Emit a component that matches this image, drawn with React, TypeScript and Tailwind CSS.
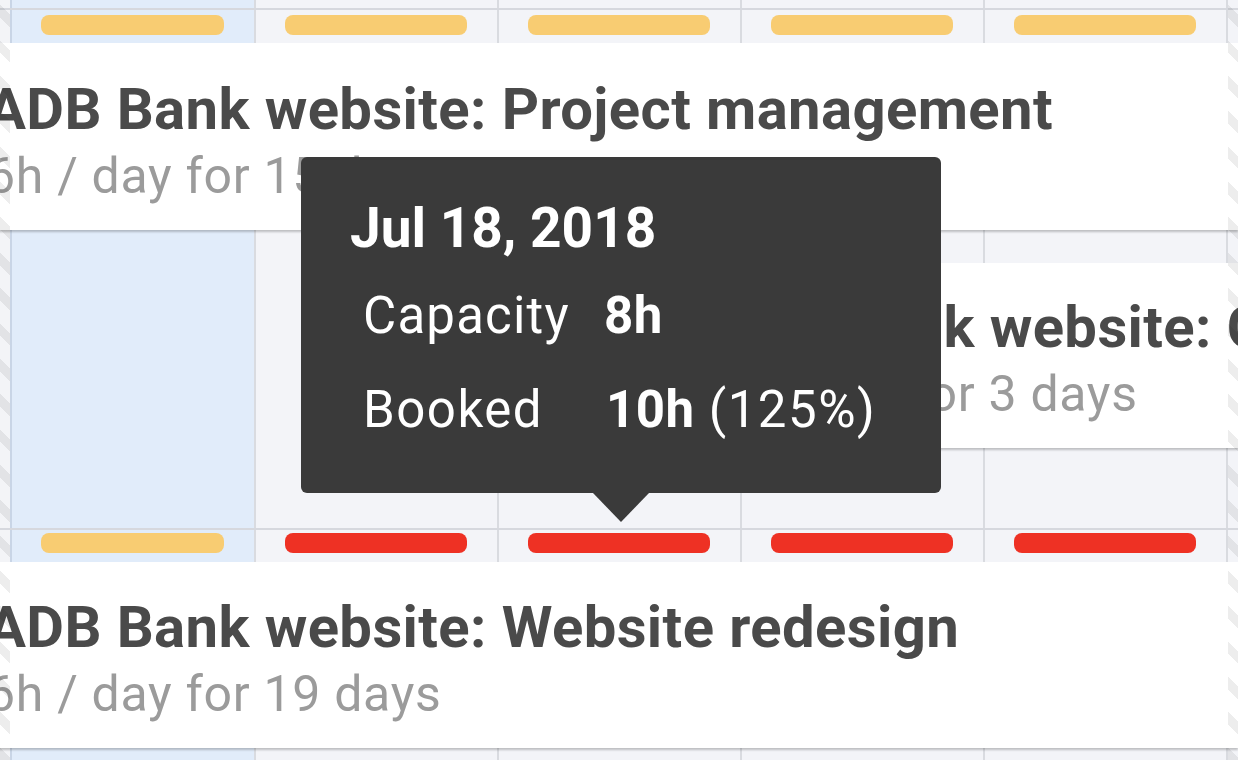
import React from "react";

type Bar = "ok" | "over";

const BAR_COLOR: Record<Bar, string> = {
  ok: "bg-[#f8cc72]",
  over: "bg-[#ee3124]",
};

function BarRow({ bars, className }: { bars: Bar[]; className: string }) {
  return (
    <div className={`flex border-t-2 border-[#d6d8de] ${className}`}>
      <div className="w-[10px] shrink-0" />
      {bars.map((b, i) => (
        <div key={i} className={`${i === 0 ? "w-[244px]" : "w-[243px]"} shrink-0 pl-[31px] pr-[30px]`}>
          <div className={`h-[20px] rounded-[8px] ${BAR_COLOR[b]}`} />
        </div>
      ))}
    </div>
  );
}

function TaskCard({ title, sub, className }: { title: string; sub: string; className: string }) {
  return (
    <div className={`bg-white shadow-[0_2px_2px_rgba(0,0,0,0.22)] whitespace-nowrap flex flex-col ${className}`}>
      <div className="text-[58px] leading-none font-bold tracking-[0.4px] text-[#4a4a4a]">{title}</div>
      <div className="mt-[13px] text-[50px] leading-none tracking-[0.7px] text-[#9b9b9b]">{sub}</div>
    </div>
  );
}

export default function App() {
  return (
    <div className="relative w-[1238px] h-[760px] overflow-hidden bg-[#f3f4f8] font-['Roboto',sans-serif]">
      {/* day columns */}
      <div className="absolute inset-0 flex">
        <div className="w-[10px] shrink-0 bg-[#f3f4f7]" />
        <div className="w-[244px] shrink-0 bg-[#e1ecfa] border-l-2 border-[#c9d5e6]" />
        <div className="w-[243px] shrink-0 border-l-2 border-[#d9dbe0]" />
        <div className="w-[243px] shrink-0 border-l-2 border-[#d9dbe0]" />
        <div className="w-[243px] shrink-0 border-l-2 border-[#d9dbe0]" />
        <div className="w-[243px] shrink-0 border-l-2 border-[#d9dbe0]" />
        <div className="flex-1 border-l-2 border-[#d9dbe0]" />
      </div>

      {/* schedule rows */}
      <div className="relative flex flex-col">
        <div className="h-[8px]" />
        <BarRow bars={["ok", "ok", "ok", "ok", "ok"]} className="pt-[5px] pb-[8px]" />
        <TaskCard
          title="ADB Bank website: Project management"
          sub="6h / day for 15 days"
          className="-ml-[30px] pl-[17px] h-[187px] pt-[37px]"
        />
        <div className="h-[33px]" />
        <TaskCard
          title="ADB Bank website: Content strategy"
          sub="4h / day for 3 days"
          className="ml-[695px] pl-[17px] h-[185px] pt-[35px]"
        />
        <div className="h-[80px]" />
        <BarRow bars={["ok", "over", "over", "over", "over"]} className="pt-[3px] pb-[9px]" />
        <TaskCard
          title="ADB Bank website: Website redesign"
          sub="6h / day for 19 days"
          className="-ml-[30px] pl-[17px] h-[186px] pt-[36px]"
        />
      </div>

      {/* non-working days hatch */}
      <div className="absolute left-0 top-0 bottom-0 w-[10px] bg-[repeating-linear-gradient(45deg,rgba(0,0,0,0.07)_0px,rgba(0,0,0,0.07)_9px,transparent_9px,transparent_25px)]" />
      <div className="absolute left-[1228px] right-0 top-0 bottom-0 bg-[repeating-linear-gradient(45deg,rgba(0,0,0,0.07)_0px,rgba(0,0,0,0.07)_9px,transparent_9px,transparent_25px)]" />

      {/* tooltip */}
      <div className="absolute left-[301px] top-[157px] w-[640px] h-[336px] rounded-[6px] bg-[#3a3a3a] text-white pl-[49px] pt-[44px]">
        <div className="text-[55px] leading-none font-bold">Jul 18, 2018</div>
        <div className="ml-[13px] mt-[34px] flex text-[51px] leading-none tracking-[1.2px]">
          <span className="w-[241px] shrink-0">Capacity</span>
          <span className="font-bold tracking-[0.5px]">8h</span>
        </div>
        <div className="ml-[13px] mt-[43px] flex text-[51px] leading-none tracking-[1.5px]">
          <span className="w-[243px] shrink-0">Booked</span>
          <span>
            <span className="font-bold tracking-[0.5px]">10h</span> (125%)
          </span>
        </div>
        <div className="absolute left-[292px] top-full w-0 h-0 border-l-[28px] border-r-[28px] border-t-[29px] border-l-transparent border-r-transparent border-t-[#3a3a3a]" />
      </div>
    </div>
  );
}
